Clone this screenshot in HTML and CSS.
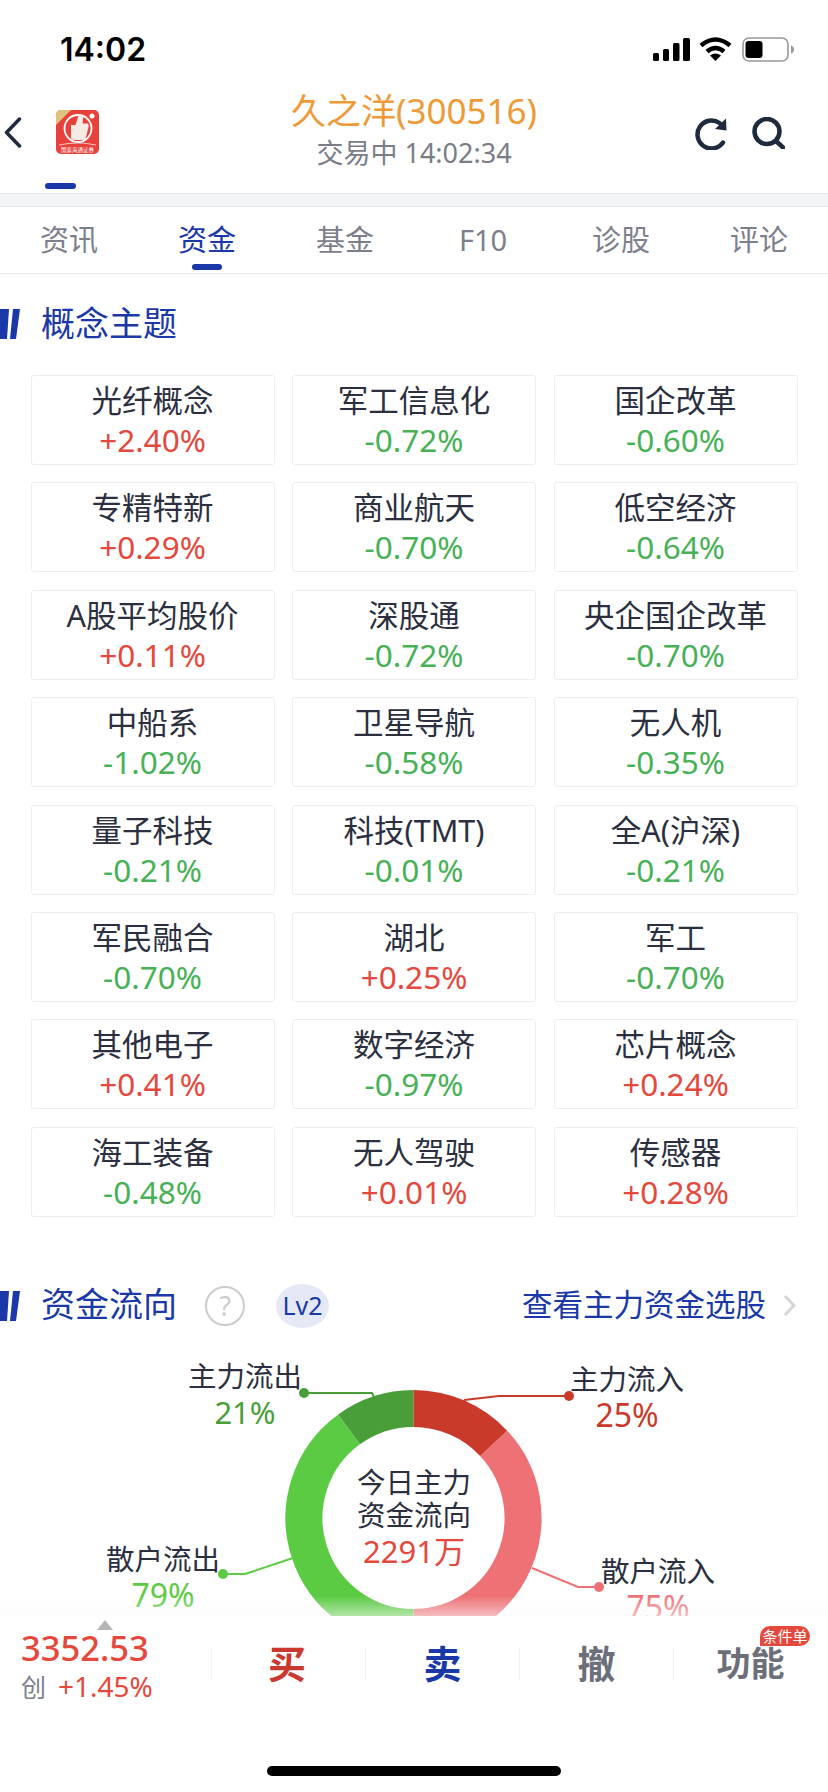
FILE: index.html
```html
<!DOCTYPE html>
<html lang="zh-CN">
<head>
    <meta charset="UTF-8">
    <meta name="viewport" content="width=device-width, initial-scale=1.0">
    <title>久之洋(300516)</title>
    <link rel="stylesheet" href="styles.css">
</head>
<body>
<div class="phone">

    <div class="status-bar">
        <span class="clock">14:02</span>
        <div class="status-icons">
            <svg class="ic-signal" width="37" height="23" viewBox="0 0 37 23">
                <rect x="0" y="15" width="6" height="8" rx="1.5"/>
                <rect x="10" y="11" width="6" height="12" rx="1.5"/>
                <rect x="20" y="5" width="6.5" height="18" rx="1.5"/>
                <rect x="30" y="0" width="7" height="23" rx="1.5"/>
            </svg>
            <svg class="ic-wifi" width="33" height="24" viewBox="0 0 33 24">
                <path class="wifi-arc" d="M2 8.5Q16.500 -3.500 31 8.500"/>
                <path class="wifi-arc" d="M8 14.500Q16.500 7.500 25 14.500"/>
                <path d="M11 18.500Q16.500 14.500 22 18.500L16.500 24Z"/>
            </svg>
            <svg class="ic-battery" width="53" height="25" viewBox="0 0 53 25">
                <rect class="batt-shell" x="1" y="1" width="45" height="23" rx="6"/>
                <rect x="3.500" y="4" width="17" height="17" rx="3"/>
                <path class="batt-nub" d="M49 8.500Q52 9.500 52 12.500Q52 15.500 49 16.500Z"/>
            </svg>
        </div>
    </div>

    <div class="nav">
        <div class="nav-left">
            <svg class="ic-back" width="18" height="31" viewBox="0 0 18 31">
                <path d="M15.500 2L2.500 15.500L15.500 29"/>
            </svg>
            <div class="logo-col">
                <svg class="logo" width="43" height="44" viewBox="0 0 43 44">
                    <rect width="43" height="44" rx="5" fill="#e8403a"/>
                    <path d="M0 15V5Q0 0 5 0H15Z" fill="#e3c27e"/>
                    <circle cx="22" cy="18.500" r="13.500" fill="none" stroke="#fff" stroke-width="1.800"/>
                    <path d="M15 15H19.500L23 4Q28 4 27 10L26.500 13.500H32Q33 15 32.500 17L30 27Q29.500 30 27 30H18Q15 30 15 27Z" fill="#f6ece6"/>
                    <circle cx="36" cy="6" r="2.500" fill="#fff"/>
                    <path class="logo-arc" d="M3 35Q21.500 31 40 35"/>
                    <text class="logo-txt" x="21.500" y="41.500">国泰海通证券</text>
                </svg>
                <div class="logo-mark"></div>
            </div>
        </div>
        <div class="nav-title">
            <div class="stock-name">久之洋(300516)</div>
            <div class="stock-state">交易中 14:02:34</div>
        </div>
        <div class="nav-right">
            <svg class="ic-line" width="34" height="33" viewBox="0 0 34 33">
                <path d="M29 25.500A14 14 0 1 1 25.500 6"/>
                <path class="ic-fill" d="M32 1.500L32.500 13.500L21 12Z"/>
            </svg>
            <svg class="ic-line" width="33" height="32" viewBox="0 0 33 32">
                <circle cx="15" cy="14.500" r="12.500"/>
                <path d="M24 24L31 30.500"/>
            </svg>
        </div>
    </div>

    <div class="band"></div>

    <div class="tabs">
        <div class="tab">资讯</div>
        <div class="tab active">资金</div>
        <div class="tab">基金</div>
        <div class="tab">F10</div>
        <div class="tab">诊股</div>
        <div class="tab">评论</div>
    </div>

    <div class="sec-head first">
        <svg class="sec-bars" width="20" height="30" viewBox="0 0 20 30">
            <path d="M0 0H9L7 30H0Z"/>
            <path d="M13 0H20L16 30H10Z"/>
        </svg>
        <span class="sec-title">概念主题</span>
    </div>

    <div class="concept-grid">
        <div class="concept"><div class="c-name">光纤概念</div><div class="c-pct up">+2.40%</div></div>
        <div class="concept"><div class="c-name">军工信息化</div><div class="c-pct down">-0.72%</div></div>
        <div class="concept"><div class="c-name">国企改革</div><div class="c-pct down">-0.60%</div></div>
        <div class="concept"><div class="c-name">专精特新</div><div class="c-pct up">+0.29%</div></div>
        <div class="concept"><div class="c-name">商业航天</div><div class="c-pct down">-0.70%</div></div>
        <div class="concept"><div class="c-name">低空经济</div><div class="c-pct down">-0.64%</div></div>
        <div class="concept"><div class="c-name">A股平均股价</div><div class="c-pct up">+0.11%</div></div>
        <div class="concept"><div class="c-name">深股通</div><div class="c-pct down">-0.72%</div></div>
        <div class="concept"><div class="c-name">央企国企改革</div><div class="c-pct down">-0.70%</div></div>
        <div class="concept"><div class="c-name">中船系</div><div class="c-pct down">-1.02%</div></div>
        <div class="concept"><div class="c-name">卫星导航</div><div class="c-pct down">-0.58%</div></div>
        <div class="concept"><div class="c-name">无人机</div><div class="c-pct down">-0.35%</div></div>
        <div class="concept"><div class="c-name">量子科技</div><div class="c-pct down">-0.21%</div></div>
        <div class="concept"><div class="c-name">科技(TMT)</div><div class="c-pct down">-0.01%</div></div>
        <div class="concept"><div class="c-name">全A(沪深)</div><div class="c-pct down">-0.21%</div></div>
        <div class="concept"><div class="c-name">军民融合</div><div class="c-pct down">-0.70%</div></div>
        <div class="concept"><div class="c-name">湖北</div><div class="c-pct up">+0.25%</div></div>
        <div class="concept"><div class="c-name">军工</div><div class="c-pct down">-0.70%</div></div>
        <div class="concept"><div class="c-name">其他电子</div><div class="c-pct up">+0.41%</div></div>
        <div class="concept"><div class="c-name">数字经济</div><div class="c-pct down">-0.97%</div></div>
        <div class="concept"><div class="c-name">芯片概念</div><div class="c-pct up">+0.24%</div></div>
        <div class="concept"><div class="c-name">海工装备</div><div class="c-pct down">-0.48%</div></div>
        <div class="concept"><div class="c-name">无人驾驶</div><div class="c-pct up">+0.01%</div></div>
        <div class="concept"><div class="c-name">传感器</div><div class="c-pct up">+0.28%</div></div>
    </div>

    <div class="sec-head second">
        <svg class="sec-bars" width="20" height="30" viewBox="0 0 20 30">
            <path d="M0 0H9L7 30H0Z"/>
            <path d="M13 0H20L16 30H10Z"/>
        </svg>
        <span class="sec-title">资金流向</span>
        <span class="q-mark">?</span>
        <span class="lv-pill">Lv2</span>
        <span class="sec-link">查看主力资金选股</span>
        <svg class="ic-more" width="13" height="23" viewBox="0 0 13 23">
            <path d="M2 2L11 11.500L2 21"/>
        </svg>
    </div>

    <!-- svg viewBox uses page coordinates -->
    <div class="flow-chart">
        <svg class="flow-svg" width="828" height="290" viewBox="0 1340 828 290">
            <g class="ring">
                <path stroke="#ee7275" d="M493.600 1442.300A109.500 109.500 0 0 1 413.500 1626.500"/>
                <path stroke="#5ccb44" d="M413.500 1626.500A109.500 109.500 0 0 1 349.100 1428.400"/>
                <path stroke="#4a9e3a" d="M349.100 1428.400A109.500 109.500 0 0 1 413.500 1407.500"/>
                <path stroke="#c93a2b" d="M413.500 1407.500A109.500 109.500 0 0 1 493.600 1442.300"/>
            </g>
            <g class="leader">
                <path stroke="#4a9e3a" d="M304 1392H372L374 1396"/>
                <circle fill="#4a9e3a" cx="304" cy="1392" r="5"/>
                <path stroke="#c93a2b" d="M569 1395H499L464 1399"/>
                <circle fill="#c93a2b" cx="569" cy="1395" r="5"/>
                <path stroke="#5ccb44" d="M223 1573H245L293 1557"/>
                <circle fill="#5ccb44" cx="223" cy="1573" r="5"/>
                <path stroke="#ee7275" d="M599 1586H578L532 1567"/>
                <circle fill="#ee7275" cx="599" cy="1586" r="5"/>
            </g>
        </svg>
        <div class="flow-center">
            <div>今日主力</div>
            <div>资金流向</div>
            <div class="flow-amount">2291万</div>
        </div>
        <div class="flow-label out-main"><div>主力流出</div><div class="fl-pct c-outmain">21%</div></div>
        <div class="flow-label in-main"><div>主力流入</div><div class="fl-pct c-inmain">25%</div></div>
        <div class="flow-label out-retail"><div>散户流出</div><div class="fl-pct c-outretail">79%</div></div>
        <div class="flow-label in-retail"><div>散户流入</div><div class="fl-pct c-inretail">75%</div></div>
    </div>

    <div class="bottom-bar">
        <div class="bar-main">
            <div class="quote">
                <div class="quote-arrow"></div>
                <div class="quote-price">3352.53</div>
                <div class="quote-sub"><span class="quote-board">创</span> <span class="quote-chg">+1.45%</span></div>
            </div>
            <div class="actions">
                <div class="act act-buy">买</div>
                <div class="act act-sell">卖</div>
                <div class="act">撤</div>
                <div class="act act-more">功能<span class="act-badge">条件单</span></div>
            </div>
        </div>
        <div class="home-indicator"></div>
    </div>

</div>
</body>
</html>
```

FILE: styles.css
```css
* { box-sizing: border-box; }
body { margin: 0; background: #fff; color: #2b2f3f; font-family: "Noto Sans", "Noto Sans CJK SC", sans-serif; }
.phone { position: relative; width: 828px; height: 1792px; overflow: hidden; background: #fff; }

/* status bar */
.status-bar { height: 90px; display: flex; justify-content: space-between; padding: 36px 33px 0 60px; }
.clock { font-family: Inter, "Liberation Sans", sans-serif; font-size: 32px; font-weight: 600; line-height: 28px; color: #000; }
.status-icons { display: flex; align-items: flex-start; padding-top: 1px; }
.ic-signal { margin-top: 1px; }
.ic-wifi { margin-left: 9px; }
.ic-battery { margin-left: 10px; }
.wifi-arc { fill: none; stroke: #000; stroke-width: 4.500; }
.batt-shell { fill: none; stroke: #999; stroke-width: 1.600; }
.batt-nub { fill: #999; }

/* nav */
.nav { height: 103px; display: grid; grid-template-columns: 1fr auto 1fr; }
.nav-left { display: flex; align-items: flex-start; padding: 20px 0 0 4px; }
.ic-back { margin-top: 7px; fill: none; stroke: #1f2a3c; stroke-width: 3.500; stroke-linecap: round; stroke-linejoin: round; }
.logo-col { margin-left: 23px; }
.logo { display: block; margin-left: 11px; }
.logo-arc { fill: none; stroke: #f6ece6; stroke-width: 0.800; }
.logo-txt { font-size: 5.500px; fill: #fff; text-anchor: middle; }
.logo-mark { width: 31px; height: 6px; margin-top: 29px; border-radius: 3px; background: #1a38a8; }
.nav-title { text-align: center; padding-top: 1px; }
.stock-name { font-size: 35px; line-height: 38px; color: #ee9a38; margin-top: 1px; }
.stock-state { font-size: 27px; line-height: 34px; margin-top: 6px; color: #7a7d88; }
.nav-right { display: flex; justify-content: flex-end; align-items: flex-start; gap: 24px; padding: 27px 43px 0 0; }
.ic-line { fill: none; stroke: #1f2a3c; stroke-width: 4.500; stroke-linecap: round; }
.ic-fill { fill: #1f2a3c; stroke: none; }

.band { height: 14px; background: #f3f5f8; border-top: 1px solid #e8e9ed; border-bottom: 1px solid #e8e9ed; }

/* tabs */
.tabs { height: 67px; display: flex; border-bottom: 1px solid #e8e9ed; }
.tab { position: relative; flex: 1; text-align: center; font-size: 29px; line-height: 66px; color: #7d808c; }
.tab.active { color: #1a38a8; }
.tab.active::after { content: ""; position: absolute; left: 54px; bottom: 3px; width: 30px; height: 6px; border-radius: 3px; background: #1a38a8; }

/* section heads */
.sec-head { display: flex; align-items: center; height: 30px; }
.sec-head.first { margin-top: 35px; }
.sec-head.second { margin-top: 74px; }
.sec-bars { fill: #1a38a8; flex: none; }
.sec-title { margin-left: 21px; padding-bottom: 3px; font-size: 34px; line-height: 40px; color: #1a38a8; }
.q-mark { width: 40px; height: 40px; margin-left: 28px; border: 2px solid #ccc; border-radius: 50%; text-align: center; font-size: 27px; line-height: 35px; color: #ccc; }
.lv-pill { width: 53px; height: 44px; margin-left: 31px; border-radius: 50%; background: #e4e9f5; text-align: center; font-size: 25px; line-height: 43px; color: #1a38a8; }
.sec-link { margin-left: auto; padding-bottom: 3px; font-size: 30.500px; line-height: 40px; color: #1a38a8; }
.ic-more { margin: 0 32px 0 17px; fill: none; stroke: #d5d5d8; stroke-width: 3; }

/* concept cards */
.concept-grid { display: grid; grid-template-columns: repeat(3, 244px); column-gap: 17.500px; row-gap: 17.400px; margin: 36px 0 0 30.500px; }
.concept { height: 90px; border: 1px solid #eceef2; border-radius: 3px; text-align: center; }
.c-name { font-size: 30.500px; line-height: 42px; margin-top: 3px; }
.c-pct { font-size: 31.500px; line-height: 38px; }
.up { color: #e5483c; }
.down { color: #47b156; }

/* donut */
.flow-chart { position: relative; height: 290px; margin-top: 20px; }
.flow-svg { position: absolute; left: 0; top: 0; }
.ring path { fill: none; stroke-width: 37; }
.leader path { fill: none; stroke-width: 2; }
.flow-center { position: absolute; left: 339px; top: 125px; width: 150px; text-align: center; font-size: 28.500px; line-height: 33px; }
.flow-amount { font-size: 31px; line-height: 38px; color: #e5483c; }
.flow-label { position: absolute; width: 130px; text-align: center; font-size: 28.500px; line-height: 36px; }
.out-main { left: 180px; top: 17px; }
.in-main { left: 562px; top: 20px; }
.out-retail { left: 98px; top: 200px; }
.in-retail { left: 593px; top: 212px; }
.fl-pct { font-size: 32px; }
.c-outmain { color: #4a9e3a; font-size: 31px; }
.c-inmain { color: #c93a2b; }
.c-outretail { color: #5ccb44; }
.c-inretail { color: #ee7275; }

/* bottom bar */
.bottom-bar { position: absolute; left: 0; right: 0; bottom: 0; height: 176px; background: #fff; }
.bottom-bar::before { content: ""; position: absolute; left: 0; right: 0; top: -20px; height: 20px; background: linear-gradient(rgba(250,250,252,0), rgba(250,250,252,0.55)); }
.bar-main { display: flex; height: 150px; }
.quote { width: 211px; padding-left: 21px; }
.quote-arrow { width: 0; height: 0; margin: 4px 0 0 76px; border-left: 8px solid transparent; border-right: 8px solid transparent; border-bottom: 10px solid #b5b5b5; }
.quote-price { font-size: 34.500px; font-weight: 500; line-height: 36px; color: #e5483c; }
.quote-sub { display: flex; align-items: center; gap: 12px; height: 40px; }
.quote-board { font-size: 25px; color: #7d808c; }
.quote-chg { font-size: 28px; color: #e5483c; }
.actions { display: grid; grid-template-columns: repeat(4, 154px); grid-template-rows: 33px; height: 33px; margin-top: 31px; }
.act { position: relative; display: flex; align-items: center; justify-content: center; border-left: 1px solid #f0f2f6; font-size: 38px; font-weight: 700; line-height: 33px; color: #6c6f7a; }
.act-buy { padding-right: 3px; color: #c9392f; }
.act-sell { color: #1a38a8; }
.act-more { font-size: 34px; }
.act-badge { position: absolute; left: 86px; top: -21px; width: 50px; height: 20px; border-radius: 10px 10px 10px 0; background: #e5483c; text-align: center; font-size: 15px; font-weight: 400; line-height: 20px; color: #fff; }
.home-indicator { width: 294px; height: 10px; margin-left: 267px; border-radius: 5px; background: #000; }
```
